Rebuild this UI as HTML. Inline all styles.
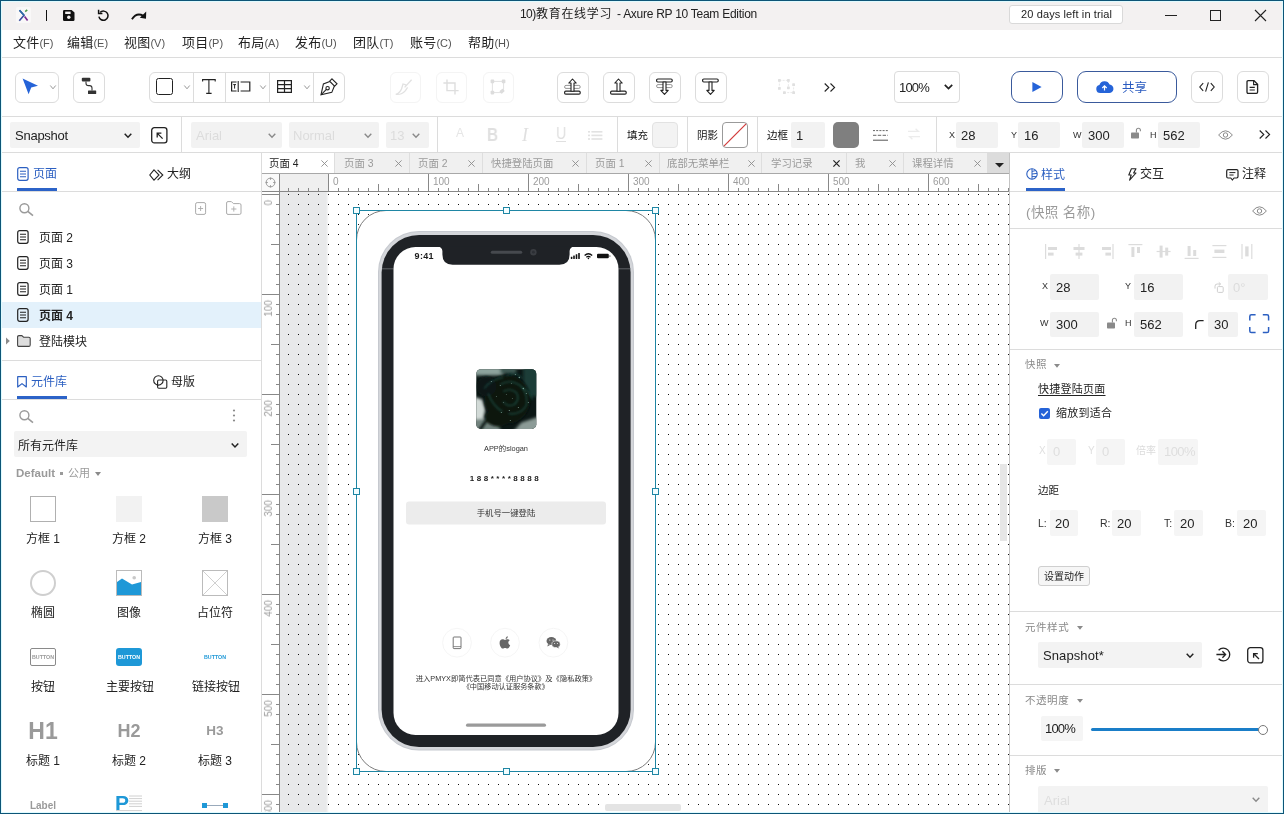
<!DOCTYPE html>
<html lang="zh"><head><meta charset="utf-8"><title>Axure RP 10</title>
<style>
*{box-sizing:border-box;margin:0;padding:0}
html,body{width:1284px;height:814px;overflow:hidden;background:#fff}
body{position:relative;font-family:"Liberation Sans","Noto Sans CJK SC",sans-serif;font-size:13px;color:#222;-webkit-font-smoothing:antialiased}
.abs,.abs *{position:absolute}
div,span,svg{position:absolute}
.t{white-space:nowrap;line-height:1;will-change:transform}
svg{overflow:visible}
/* frame */
#frame{left:0;top:0;width:1284px;height:814px;border:1px solid #0d5577;z-index:100;pointer-events:none}
#frame2{left:1px;top:1px;width:1282px;height:812px;border:1px solid #dffbff;z-index:99;pointer-events:none}
#titlebar{left:0;top:0;width:1284px;height:30px;background:#f3f1f1}
#menubar{left:0;top:30px;width:1284px;height:28px;background:#fff;border-bottom:1px solid #dcdcdc}
.mi{top:36px;font-size:13px;color:#222;letter-spacing:0.2px}
.mi i{font-style:normal;color:#555;font-size:11px;letter-spacing:0;position:static}
#toolbar{left:0;top:58px;width:1284px;height:58px;background:#fff}
.tb{top:72px;height:31px;border:1px solid #dcdcdc;border-radius:6px;background:#fff}
#stylebar{left:0;top:116px;width:1284px;height:37px;background:#fff;border-top:1px solid #dcdcdc;border-bottom:1px solid #dcdcdc}
.vd{top:117px;width:1px;height:35px;background:#dcdcdc}
.cl{width:80px;text-align:center;font-size:12px;color:#222}
.rl{font-size:10px;color:#9c9c9c}
.hd{width:7px;height:7px;background:#f2fdff;border:1px solid #1f86a4}
.lb{font-size:9px;color:#333}
.sh{font-size:10.5px;color:#8a8a8a;letter-spacing:0.55px}
.inp{background:#f2f2f2;border-radius:2px}
</style></head><body>
<div id="titlebar"></div>
<div id="menubar"></div>
<div id="toolbar"></div>
<div id="stylebar"></div>
<div style="left:16px;top:7px;width:15px;height:16px;background:#f9f8f8;border-radius:2px"></div><svg style="left:18px;top:9px" width="12" height="13" viewBox="0 0 12 13"><path d="M1.5 1.2 L6 6.3 L1.3 11.8" fill="none" stroke="#3b4fa0" stroke-width="1.6"/><path d="M1.5 1.2 L6 6.3" fill="none" stroke="#2b6ea8" stroke-width="1.6"/><path d="M7.2 2.6 L9.2 0.8" stroke="#4a9a4a" stroke-width="1.6"/><path d="M6.6 7.4 L9.6 11.4" stroke="#7a2a90" stroke-width="1.6"/></svg>
<div style="left:46px;top:10px;width:1px;height:11px;background:#111"></div>
<svg style="left:63px;top:10px" width="12" height="11" viewBox="0 0 12 11"><path d="M1.2 0 H8.6 L11.5 2.6 V9.8 Q11.5 11 10.3 11 H1.2 Q0 11 0 9.8 V1.2 Q0 0 1.2 0 Z" fill="#111"/><rect x="2.2" y="1.6" width="5.4" height="2.4" fill="#f3f1f1"/><circle cx="5.8" cy="7.3" r="1.7" fill="#f3f1f1"/></svg>
<svg style="left:97px;top:9px" width="13" height="13" viewBox="0 0 13 13"><path d="M3.2 3.4 A4.6 4.6 0 1 1 1.9 7.6" fill="none" stroke="#111" stroke-width="1.5"/><path d="M1.6 0.8 V4.6 H5.4" fill="none" stroke="#111" stroke-width="1.5"/></svg>
<svg style="left:131px;top:11px" width="16" height="10" viewBox="0 0 16 10"><path d="M0.9 8.2 Q5.6 1 12.4 4.8" fill="none" stroke="#111" stroke-width="1.8"/><path d="M15.2 0.6 L15 7.8 L8.8 6.8 Z" fill="#111"/></svg>
<span class="t" style="left:520px;top:8px;font-size:12px;color:#222;letter-spacing:-0.6px">10)</span><span class="t" style="left:535.6px;top:8px;font-size:12px;color:#222;letter-spacing:0.7px">教育在线学习</span><span class="t" style="left:617px;top:8px;font-size:12px;color:#222;letter-spacing:-0.27px">- Axure RP 10 Team Edition</span>
<div style="left:1009px;top:5px;width:114px;height:19px;background:#fff;border:1px solid #d9d9d9;border-radius:3px"></div>
<span class="t" style="left:1021px;top:9px;font-size:11px;color:#222;letter-spacing:0.12px">20 days left in trial</span>
<div style="left:1165px;top:15px;width:12px;height:1px;background:#222"></div>
<div style="left:1210px;top:10px;width:11px;height:11px;border:1px solid #222"></div>
<svg style="left:1255px;top:10px" width="11" height="11" viewBox="0 0 11 11"><path d="M0 0 L11 11 M11 0 L0 11" stroke="#222" stroke-width="1.1"/></svg>
<!--TITLE-->
<span class="t mi" style="left:13px">文件<i>(F)</i></span>
<span class="t mi" style="left:67px">编辑<i>(E)</i></span>
<span class="t mi" style="left:124px">视图<i>(V)</i></span>
<span class="t mi" style="left:182px">项目<i>(P)</i></span>
<span class="t mi" style="left:238px">布局<i>(A)</i></span>
<span class="t mi" style="left:295px">发布<i>(U)</i></span>
<span class="t mi" style="left:353px">团队<i>(T)</i></span>
<span class="t mi" style="left:410px">账号<i>(C)</i></span>
<span class="t mi" style="left:468px">帮助<i>(H)</i></span>
<!--MENU-->
<div class="tb" style="left:15px;width:44px"></div>
<svg style="left:22px;top:78px" width="17" height="17" viewBox="0 0 17 17"><path d="M0.6 0.4 L16 7.8 L9.2 9.6 L6.6 16.2 Z" fill="#2563d8"/></svg>
<svg style="left:50px;top:85px" width="6" height="5" viewBox="0 0 6 5"><path d="M0.3 0.5 L3 3.8 L5.7 0.5" fill="none" stroke="#999" stroke-width="1"/></svg>
<div class="tb" style="left:73px;width:32px"></div>
<svg style="left:81px;top:77px" width="16" height="18" viewBox="0 0 16 18"><rect x="0.8" y="0.8" width="8.6" height="3.6" rx="1" fill="#333"/><rect x="7" y="13.4" width="8.2" height="3.6" rx="0.6" fill="#333"/><path d="M5 4.4 V6.2 Q5 8.6 7.6 8.6 H8.6 Q11 8.6 11 11 V13.4" fill="none" stroke="#333" stroke-width="1.1"/></svg>
<div class="tb" style="left:149px;width:196px"></div>
<div style="left:193px;top:73px;width:1px;height:29px;background:#dcdcdc"></div>
<div style="left:225px;top:73px;width:1px;height:29px;background:#dcdcdc"></div>
<div style="left:269px;top:73px;width:1px;height:29px;background:#dcdcdc"></div>
<div style="left:313px;top:73px;width:1px;height:29px;background:#dcdcdc"></div>
<div style="left:156px;top:78px;width:17px;height:17px;border:1.5px solid #222;border-radius:2.5px"></div>
<svg style="left:184px;top:85px" width="6" height="5" viewBox="0 0 6 5"><path d="M0.3 0.5 L3 3.8 L5.7 0.5" fill="none" stroke="#999" stroke-width="1"/></svg>
<svg style="left:202px;top:79px" width="14" height="15" viewBox="0 0 14 15"><path d="M0.6 2.6 V0.6 H13.2 V2.6 M6.9 0.6 V14.4 M4.2 14.4 H9.6" fill="none" stroke="#222" stroke-width="1.1"/></svg>
<svg style="left:231px;top:81px" width="20" height="11" viewBox="0 0 20 11"><path d="M5.6 1 H0.6 V10 H5.6" fill="none" stroke="#222" stroke-width="1.2"/><path d="M7.2 0 V11" stroke="#222" stroke-width="1.1"/><path d="M9.6 1 H18.8 V10 H9.6" fill="none" stroke="#222" stroke-width="1.2"/><path d="M2.2 3.6 H5 M3.6 3.6 V7.6" stroke="#222" stroke-width="1"/></svg>
<svg style="left:260px;top:85px" width="6" height="5" viewBox="0 0 6 5"><path d="M0.3 0.5 L3 3.8 L5.7 0.5" fill="none" stroke="#999" stroke-width="1"/></svg>
<svg style="left:277px;top:80px" width="15" height="13" viewBox="0 0 15 13"><path d="M0.6 0.6 H14.4 V12.4 H0.6 Z M0.6 4.6 H14.4 M0.6 8.6 H14.4 M7.5 0.6 V12.4" fill="none" stroke="#222" stroke-width="1.2"/></svg>
<svg style="left:304px;top:85px" width="6" height="5" viewBox="0 0 6 5"><path d="M0.3 0.5 L3 3.8 L5.7 0.5" fill="none" stroke="#999" stroke-width="1"/></svg>
<svg style="left:320px;top:78px" width="18" height="18" viewBox="0 0 18 18"><path d="M12 0.8 L17 5.8 L14.6 8.2 L9.6 3.2 Z" fill="none" stroke="#222" stroke-width="1.1"/><path d="M9.8 3.4 L3.4 6 L1 16.8 L11.8 14.4 L14.4 8" fill="none" stroke="#222" stroke-width="1.1"/><circle cx="7.6" cy="10.2" r="1.7" fill="none" stroke="#222" stroke-width="1.1"/><path d="M1.2 16.6 L6.4 11.4" stroke="#222" stroke-width="1.1"/></svg>
<!-- disabled -->
<div class="tb" style="left:390px;width:31px;border-color:#f4f4f4"></div>
<svg style="left:395px;top:79px" width="18" height="17" viewBox="0 0 18 17" opacity="0.9"><path d="M16.6 0.8 L9.6 8.4 M11.6 6.2 L8 5 L6.6 9.8 Q5 14 0.8 15.4 Q7 16 10.4 11.6 L12.6 8.4" fill="none" stroke="#dedede" stroke-width="1.3"/></svg>
<div class="tb" style="left:436px;width:31px;border-color:#f4f4f4"></div>
<svg style="left:443px;top:79px" width="16" height="16" viewBox="0 0 16 16"><path d="M4 0.6 V11.6 H15.6 M0.4 4 H12 V15.6" fill="none" stroke="#dedede" stroke-width="1.4"/></svg>
<div class="tb" style="left:483px;width:31px;border-color:#f4f4f4"></div>
<svg style="left:490px;top:79px" width="16" height="16" viewBox="0 0 16 16"><path d="M2.4 2.4 H13.6 V10 L11 13.6 H2.4 Z" fill="none" stroke="#e2e2e2" stroke-width="1"/><rect x="0.6" y="0.6" width="3.6" height="3.6" rx="0.8" fill="#dcdcdc"/><rect x="11.8" y="0.6" width="3.6" height="3.6" rx="0.8" fill="#dcdcdc"/><rect x="0.6" y="11.8" width="3.6" height="3.6" rx="0.8" fill="#dcdcdc"/><rect x="10" y="10.6" width="4.4" height="3.4" rx="0.8" fill="#dcdcdc" transform="rotate(-40 12 12.4)"/></svg>
<!-- layer buttons -->
<div class="tb" style="left:557px;width:32px"></div>
<svg style="left:564px;top:78px" width="17" height="17" viewBox="0 0 17 17"><rect x="0.6" y="7.4" width="15.6" height="3" rx="1.4" fill="none" stroke="#888" stroke-width="0.9"/><rect x="0.6" y="13.2" width="15.6" height="3" rx="1.2" fill="#fff" stroke="#222" stroke-width="1.2"/><path d="M8.5 1 L4.8 5 H7 V13.2 H10 V5 H12.2 Z" fill="#fff" stroke="#222" stroke-width="1.1" stroke-linejoin="round"/></svg>
<div class="tb" style="left:603px;width:32px"></div>
<svg style="left:610px;top:78px" width="17" height="17" viewBox="0 0 17 17"><rect x="0.6" y="13.2" width="15.6" height="3" rx="1.2" fill="#fff" stroke="#222" stroke-width="1.2"/><path d="M8.5 1 L4.8 5 H7 V13.2 H10 V5 H12.2 Z" fill="#fff" stroke="#222" stroke-width="1.1" stroke-linejoin="round"/></svg>
<div class="tb" style="left:649px;width:32px"></div>
<svg style="left:656px;top:78px" width="17" height="17" viewBox="0 0 17 17"><rect x="0.6" y="6.6" width="15.6" height="3" rx="1.4" fill="none" stroke="#888" stroke-width="0.9"/><rect x="0.6" y="1" width="15.6" height="3" rx="1.2" fill="#fff" stroke="#222" stroke-width="1.2"/><path d="M8.5 16.4 L4.8 12.4 H7 V4 H10 V12.4 H12.2 Z" fill="#fff" stroke="#222" stroke-width="1.1" stroke-linejoin="round"/></svg>
<div class="tb" style="left:695px;width:32px"></div>
<svg style="left:702px;top:78px" width="17" height="17" viewBox="0 0 17 17"><rect x="0.6" y="1" width="15.6" height="3" rx="1.2" fill="#fff" stroke="#222" stroke-width="1.2"/><path d="M8.5 16.4 L4.8 12.4 H7 V4 H10 V12.4 H12.2 Z" fill="#fff" stroke="#222" stroke-width="1.1" stroke-linejoin="round"/></svg>
<svg style="left:778px;top:79px" width="18" height="15" viewBox="0 0 18 15"><path d="M1.4 1.4 H10.4 V9 M1.4 1.4 V9.6 M6 13.6 H15.6 V5.6" fill="none" stroke="#e6e6e6" stroke-width="0.9" stroke-dasharray="2 1.2"/><g fill="#e0e0e0"><rect x="0" y="0" width="2.8" height="2.8" rx="0.6"/><rect x="9" y="0" width="2.8" height="2.8" rx="0.6"/><rect x="0" y="8" width="2.8" height="2.8" rx="0.6"/><rect x="9" y="7.4" width="2.8" height="2.8" rx="0.6"/><rect x="14.2" y="4.2" width="2.8" height="2.8" rx="0.6"/><rect x="5" y="12.2" width="2.8" height="2.8" rx="0.6"/><rect x="14.2" y="12.2" width="2.8" height="2.8" rx="0.6"/></g></svg>
<svg style="left:824px;top:83px" width="12" height="9" viewBox="0 0 12 9"><path d="M0.7 0.5 L4.8 4.5 L0.7 8.5 M6.5 0.5 L10.6 4.5 L6.5 8.5" fill="none" stroke="#222" stroke-width="1.1"/></svg>
<div class="tb" style="left:894px;top:71px;width:66px;height:32px;border-radius:4px"></div>
<span class="t" style="left:899px;top:81px;font-size:13px;color:#222;letter-spacing:-0.8px">100%</span>
<svg style="left:944px;top:84px" width="9" height="6" viewBox="0 0 9 6"><path d="M0.8 0.8 L4.5 4.6 L8.2 0.8" fill="none" stroke="#222" stroke-width="1.7"/></svg>
<div style="left:1011px;top:71px;width:52px;height:32px;border:1.3px solid #3a5a9c;border-radius:9px;background:#fff"></div>
<svg style="left:1032px;top:82px" width="10" height="10" viewBox="0 0 10 10"><path d="M0.4 0 L9.6 5 L0.4 10 Z" fill="#2563d8"/></svg>
<div style="left:1077px;top:71px;width:100px;height:32px;border:1.3px solid #3a5a9c;border-radius:9px;background:#fff"></div>
<svg style="left:1096px;top:80px" width="17" height="13" viewBox="0 0 17 13"><path d="M4.2 13 A4 4 0 0 1 3.4 5.1 A5.4 5.4 0 0 1 13.6 4.6 A4.2 4.2 0 0 1 12.9 13 Z" fill="#2563d8"/><path d="M8.5 10.6 V6 M6.3 8 L8.5 5.8 L10.7 8" fill="none" stroke="#fff" stroke-width="1.2"/></svg>
<span class="t" style="left:1121.5px;top:82px;font-size:12.5px;color:#2a5bc0">共享</span>
<div class="tb" style="left:1191px;top:71px;width:32px;height:32px"></div>
<svg style="left:1199px;top:82px" width="16" height="10" viewBox="0 0 16 10"><path d="M4.2 1.2 L0.8 5 L4.2 8.8 M11.8 1.2 L15.2 5 L11.8 8.8 M9.4 0.4 L6.6 9.6" fill="none" stroke="#222" stroke-width="1.1"/></svg>
<div class="tb" style="left:1237px;top:71px;width:32px;height:32px"></div>
<svg style="left:1246px;top:80px" width="13" height="14" viewBox="0 0 13 14"><path d="M2.2 0.7 H8 L11.6 4.2 V12 Q11.6 13.3 10.4 13.3 H2.2 Q1 13.3 1 12 V2 Q1 0.7 2.2 0.7 Z" fill="none" stroke="#222" stroke-width="1.3"/><path d="M7.6 0.8 V4.6 H11.4" fill="none" stroke="#222" stroke-width="1.1"/><path d="M3.6 7.4 H8.8 M3.6 10 H8.8" stroke="#222" stroke-width="1.1"/></svg>
<!--TOOLBAR-->
<div class="inp" style="left:10px;top:122px;width:130px;height:26px;background:#f3f3f3"></div>
<span class="t" style="left:15px;top:129px;font-size:13px;color:#222;letter-spacing:-0.25px">Snapshot</span>
<svg style="left:124px;top:133px" width="8" height="6" viewBox="0 0 8 6"><path d="M0.7 0.8 L4 4.2 L7.3 0.8" fill="none" stroke="#222" stroke-width="1.5"/></svg>
<svg style="left:151px;top:127px" width="17" height="17" viewBox="0 0 17 17"><rect x="0.7" y="0.7" width="15.2" height="15.2" rx="2.6" fill="none" stroke="#222" stroke-width="1.3"/><path d="M11.6 11.6 L6.6 6.6 M6.2 10.4 V6.2 H10.4" fill="none" stroke="#222" stroke-width="1.3"/></svg>
<div class="vd" style="left:181px"></div>
<div class="inp" style="left:191px;top:122px;width:91px;height:26px"></div>
<span class="t" style="left:196px;top:129px;font-size:13px;color:#dcdcdc">Arial</span>
<svg style="left:268px;top:133px" width="8" height="6" viewBox="0 0 8 6"><path d="M0.7 0.8 L4 4.2 L7.3 0.8" fill="none" stroke="#8a8a8a" stroke-width="1.4"/></svg>
<div class="inp" style="left:289px;top:122px;width:90px;height:26px"></div>
<span class="t" style="left:293px;top:129px;font-size:13px;color:#dcdcdc">Normal</span>
<svg style="left:364px;top:133px" width="8" height="6" viewBox="0 0 8 6"><path d="M0.7 0.8 L4 4.2 L7.3 0.8" fill="none" stroke="#8a8a8a" stroke-width="1.4"/></svg>
<div class="inp" style="left:386px;top:122px;width:43px;height:26px"></div>
<span class="t" style="left:390px;top:129px;font-size:13px;color:#dcdcdc">13</span>
<svg style="left:412px;top:133px" width="8" height="6" viewBox="0 0 8 6"><path d="M0.7 0.8 L4 4.2 L7.3 0.8" fill="none" stroke="#8a8a8a" stroke-width="1.4"/></svg>
<div class="vd" style="left:437px"></div>
<span class="t" style="left:455.5px;top:127px;font-size:12px;color:#e6e6e6">A</span>
<span class="t" style="left:487px;top:126px;font-size:18px;color:#e0e0e0;font-weight:bold;transform:scaleX(0.85);transform-origin:0 0">B</span>
<span class="t" style="left:522px;top:126px;font-size:18px;color:#e0e0e0;font-style:italic;font-family:'Liberation Serif',serif">I</span>
<span class="t" style="left:555.5px;top:126px;font-size:16px;color:#e0e0e0;transform:scaleX(0.88);transform-origin:0 0">U</span>
<div style="left:556px;top:141px;width:10px;height:1px;background:#e0e0e0"></div>
<svg style="left:588px;top:131px" width="15" height="9" viewBox="0 0 15 9"><g fill="#e2e2e2"><rect x="0" y="0" width="2" height="1.6"/><rect x="3.4" y="0" width="11" height="1.6"/><rect x="0" y="3.6" width="2" height="1.6"/><rect x="3.4" y="3.6" width="11" height="1.6"/><rect x="0" y="7.2" width="2" height="1.6"/><rect x="3.4" y="7.2" width="11" height="1.6"/></g></svg>
<div class="vd" style="left:617px"></div>
<span class="t" style="left:627px;top:130px;font-size:10.5px;color:#111">填充</span>
<div style="left:652px;top:122px;width:26px;height:26px;background:#f3f3f3;border:1px solid #e2e2e2;border-radius:4px"></div>
<div class="vd" style="left:687px"></div>
<span class="t" style="left:697px;top:130px;font-size:10.5px;color:#111">阴影</span>
<div style="left:722px;top:122px;width:26px;height:26px;background:#fff;border:1px solid #9a9a9a;border-radius:4px;overflow:hidden"><svg style="left:0;top:0" width="24" height="24" viewBox="0 0 24 24"><path d="M0 24 L24 0" stroke="#d23a3a" stroke-width="1.2"/></svg></div>
<div class="vd" style="left:757px"></div>
<span class="t" style="left:767px;top:130px;font-size:10.5px;color:#111">边框</span>
<div class="inp" style="left:791px;top:122px;width:34px;height:26px"></div>
<span class="t" style="left:796px;top:129px;font-size:13px;color:#222">1</span>
<div style="left:833px;top:122px;width:26px;height:26px;background:#7f7f7f;border-radius:5px"></div>
<svg style="left:873px;top:130px" width="15" height="11" viewBox="0 0 15 11"><path d="M0 0.6 H15" stroke="#555" stroke-width="0.9" stroke-dasharray="2 1.2"/><path d="M0 5.3 H15" stroke="#555" stroke-width="0.9" stroke-dasharray="3.4 1.4"/><path d="M0 10.2 H15" stroke="#555" stroke-width="1"/></svg>
<svg style="left:907px;top:128px" width="14" height="12" viewBox="0 0 14 12"><path d="M1 3.4 H11.4 L8.6 0.8 M13 8.6 H2.6 L5.4 11.2" fill="none" stroke="#ececec" stroke-width="1.3"/></svg>
<div class="vd" style="left:936px"></div>
<span class="t" style="left:949px;top:131px;font-size:9px;color:#333">X</span>
<div class="inp" style="left:956px;top:122px;width:42px;height:26px"></div>
<span class="t" style="left:961px;top:129px;font-size:13px;color:#222">28</span>
<span class="t" style="left:1011px;top:131px;font-size:9px;color:#333">Y</span>
<div class="inp" style="left:1018px;top:122px;width:42px;height:26px"></div>
<span class="t" style="left:1024px;top:129px;font-size:13px;color:#222">16</span>
<span class="t" style="left:1073px;top:131px;font-size:9px;color:#333">W</span>
<div class="inp" style="left:1082px;top:122px;width:42px;height:26px"></div>
<span class="t" style="left:1088px;top:129px;font-size:13px;color:#222">300</span>
<svg style="left:1131px;top:127px" width="10" height="12" viewBox="0 0 10 12"><rect x="0" y="5.6" width="8" height="6" rx="0.8" fill="#8a8a8a"/><path d="M5.4 5.6 V3.2 A2 2 0 0 1 9.4 3.2 V4.2" fill="none" stroke="#8a8a8a" stroke-width="1.1"/></svg>
<span class="t" style="left:1150px;top:131px;font-size:9px;color:#333">H</span>
<div class="inp" style="left:1158px;top:122px;width:42px;height:26px"></div>
<span class="t" style="left:1163px;top:129px;font-size:13px;color:#222">562</span>
<svg style="left:1218px;top:130px" width="15" height="10" viewBox="0 0 15 10"><path d="M0.6 5 Q7.5 -3.4 14.4 5 Q7.5 13.4 0.6 5 Z" fill="none" stroke="#8a8a8a" stroke-width="1"/><circle cx="7.5" cy="5" r="2.2" fill="none" stroke="#8a8a8a" stroke-width="1"/></svg>
<svg style="left:1259px;top:130px" width="12" height="9" viewBox="0 0 12 9"><path d="M0.7 0.5 L4.8 4.5 L0.7 8.5 M6.5 0.5 L10.6 4.5 L6.5 8.5" fill="none" stroke="#222" stroke-width="1.1"/></svg>
<!--STYLEBAR-->
<div id="leftpanel" style="left:0;top:153px;width:261px;height:661px;background:#fff"></div>
<div style="left:261px;top:153px;width:1px;height:661px;background:#dcdcdc"></div>
<!-- tabs -->
<svg style="left:17px;top:167px" width="12" height="14" viewBox="0 0 12 14"><rect x="0.7" y="0.7" width="10.4" height="12.6" rx="2" fill="none" stroke="#2b5fc1" stroke-width="1.2"/><path d="M3 4.2 H9 M3 7 H9 M3 9.8 H9" stroke="#2b5fc1" stroke-width="1.1"/></svg>
<span class="t" style="left:33px;top:168px;font-size:12px;color:#2b5fc1">页面</span>
<div style="left:17px;top:188px;width:40px;height:3px;background:#2c63c8"></div>
<svg style="left:149px;top:169px" width="15" height="12" viewBox="0 0 15 12"><path d="M5 0.8 L10 6 L5 11.2 L0.8 6 Z" fill="none" stroke="#222" stroke-width="1.1"/><path d="M8.6 0.8 L13.8 6 L8.6 11.2" fill="none" stroke="#222" stroke-width="1.1"/></svg>
<span class="t" style="left:167px;top:168px;font-size:12px;color:#222">大纲</span>
<div style="left:0;top:191px;width:261px;height:1px;background:#dcdcdc"></div>
<!-- search row -->
<svg style="left:19px;top:203px" width="15" height="13" viewBox="0 0 15 13"><circle cx="5.4" cy="5.2" r="4.5" fill="none" stroke="#9a9a9a" stroke-width="1.4"/><path d="M8.8 8.4 L14 12.6" stroke="#9a9a9a" stroke-width="1.6"/></svg>
<svg style="left:195px;top:202px" width="12" height="13" viewBox="0 0 12 13"><rect x="0.6" y="0.6" width="10" height="11.8" rx="1.6" fill="none" stroke="#aaa" stroke-width="1"/><path d="M5.6 4 V9 M3.1 6.5 H8.1" stroke="#aaa" stroke-width="0.9"/></svg>
<svg style="left:226px;top:201px" width="16" height="14" viewBox="0 0 16 14"><path d="M0.6 2 Q0.6 0.6 2 0.6 H5.4 L7.4 2.6 H13.6 Q15 2.6 15 4 V12 Q15 13.4 13.6 13.4 H2 Q0.6 13.4 0.6 12 Z" fill="none" stroke="#aaa" stroke-width="1"/><path d="M7.8 5.4 V10.6 M5.2 8 H10.4" stroke="#aaa" stroke-width="0.9"/></svg>
<!-- pages -->
<div style="left:0;top:302px;width:261px;height:26px;background:#e3f1fb"></div>
<svg class="pgi" style="left:17px;top:230px" width="12" height="14" viewBox="0 0 12 14"><rect x="0.7" y="0.7" width="10.4" height="12.6" rx="2" fill="none" stroke="#222" stroke-width="1.2"/><path d="M3 4.2 H9 M3 7 H9 M3 9.8 H9" stroke="#222" stroke-width="1.1"/></svg>
<span class="t" style="left:39px;top:232px;font-size:12px;color:#222">页面 2</span>
<svg class="pgi" style="left:17px;top:256px" width="12" height="14" viewBox="0 0 12 14"><rect x="0.7" y="0.7" width="10.4" height="12.6" rx="2" fill="none" stroke="#222" stroke-width="1.2"/><path d="M3 4.2 H9 M3 7 H9 M3 9.8 H9" stroke="#222" stroke-width="1.1"/></svg>
<span class="t" style="left:39px;top:258px;font-size:12px;color:#222">页面 3</span>
<svg class="pgi" style="left:17px;top:282px" width="12" height="14" viewBox="0 0 12 14"><rect x="0.7" y="0.7" width="10.4" height="12.6" rx="2" fill="none" stroke="#222" stroke-width="1.2"/><path d="M3 4.2 H9 M3 7 H9 M3 9.8 H9" stroke="#222" stroke-width="1.1"/></svg>
<span class="t" style="left:39px;top:284px;font-size:12px;color:#222">页面 1</span>
<svg class="pgi" style="left:17px;top:308px" width="12" height="14" viewBox="0 0 12 14"><rect x="0.7" y="0.7" width="10.4" height="12.6" rx="2" fill="none" stroke="#222" stroke-width="1.2"/><path d="M3 4.2 H9 M3 7 H9 M3 9.8 H9" stroke="#222" stroke-width="1.1"/></svg>
<span class="t" style="left:39px;top:310px;font-size:12px;color:#222;font-weight:bold">页面 4</span>
<svg style="left:6px;top:337px" width="4" height="8" viewBox="0 0 4 8"><path d="M0 0.4 L3.8 4 L0 7.6 Z" fill="#8a8a8a"/></svg>
<svg style="left:17px;top:335px" width="14" height="12" viewBox="0 0 14 12"><path d="M0.6 2 Q0.6 0.6 2 0.6 H4.8 L6.6 2.2 H11.8 Q13.2 2.2 13.2 3.6 V10 Q13.2 11.4 11.8 11.4 H2 Q0.6 11.4 0.6 10 Z" fill="#dedede" stroke="#444" stroke-width="1.1"/></svg>
<span class="t" style="left:39px;top:336px;font-size:12px;color:#222">登陆模块</span>
<div style="left:0;top:360px;width:261px;height:1px;background:#dcdcdc"></div>
<!-- library tabs -->
<svg style="left:17px;top:376px" width="10" height="12" viewBox="0 0 10 12"><path d="M0.7 0.7 H9.3 V11 L5 7.6 L0.7 11 Z" fill="none" stroke="#2b5fc1" stroke-width="1.2" stroke-linejoin="round"/></svg>
<span class="t" style="left:31px;top:376px;font-size:12px;color:#2b5fc1">元件库</span>
<div style="left:17px;top:396px;width:50px;height:3px;background:#2c63c8"></div>
<svg style="left:153px;top:375px" width="15" height="14" viewBox="0 0 15 14"><circle cx="5.4" cy="5.4" r="4.7" fill="none" stroke="#222" stroke-width="1.1"/><rect x="4.6" y="5" width="9.2" height="8.2" rx="1.2" fill="none" stroke="#222" stroke-width="1.1"/></svg>
<span class="t" style="left:171px;top:376px;font-size:12px;color:#222">母版</span>
<div style="left:0;top:399px;width:261px;height:1px;background:#dcdcdc"></div>
<svg style="left:19px;top:410px" width="15" height="13" viewBox="0 0 15 13"><circle cx="5.4" cy="5.2" r="4.5" fill="none" stroke="#9a9a9a" stroke-width="1.4"/><path d="M8.8 8.4 L14 12.6" stroke="#9a9a9a" stroke-width="1.6"/></svg>
<svg style="left:232px;top:409px" width="4" height="13" viewBox="0 0 4 13"><circle cx="2" cy="1.5" r="1.1" fill="#8a8a8a"/><circle cx="2" cy="6.5" r="1.1" fill="#8a8a8a"/><circle cx="2" cy="11.5" r="1.1" fill="#8a8a8a"/></svg>
<div class="inp" style="left:14px;top:431px;width:233px;height:26px;background:#f3f3f3"></div>
<span class="t" style="left:18px;top:440px;font-size:12px;color:#222">所有元件库</span>
<svg style="left:231px;top:443px" width="8" height="6" viewBox="0 0 8 6"><path d="M0.7 0.6 L4 4 L7.3 0.6" fill="none" stroke="#222" stroke-width="1.5"/></svg>
<span class="t" style="left:16px;top:468px;font-size:11.5px;color:#9a9a9a;font-weight:bold">Default</span>
<div style="left:60px;top:472px;width:3px;height:3px;background:#9a9a9a"></div>
<span class="t" style="left:68px;top:468px;font-size:11px;color:#9a9a9a">公用</span>
<svg style="left:95px;top:472px" width="6" height="4" viewBox="0 0 6 4"><path d="M0 0 H6 L3 4 Z" fill="#8a8a8a"/></svg>
<!-- components -->
<div style="left:30px;top:496px;width:26px;height:26px;border:1px solid #b0b0b0;background:#fff"></div>
<div style="left:116px;top:496px;width:26px;height:26px;background:#f2f2f2"></div>
<div style="left:202px;top:496px;width:26px;height:26px;background:#c9c9c9"></div>
<span class="t cl" style="left:3px;top:533px">方框 1</span>
<span class="t cl" style="left:89px;top:533px">方框 2</span>
<span class="t cl" style="left:175px;top:533px">方框 3</span>
<div style="left:30px;top:570px;width:26px;height:26px;border:2px solid #cfcfcf;border-radius:50%"></div>
<svg style="left:116px;top:570px" width="26" height="26" viewBox="0 0 26 26"><rect x="0.5" y="0.5" width="25" height="25" fill="#fff" stroke="#bbb" stroke-width="1"/><path d="M1 12 L6 8.4 L16 14.6 L25 12 V25 H1 Z" fill="#1e98d7"/><circle cx="18.2" cy="7.8" r="1.8" fill="#c8c8c8"/></svg>
<svg style="left:202px;top:570px" width="26" height="26" viewBox="0 0 26 26"><rect x="0.5" y="0.5" width="25" height="25" fill="#fff" stroke="#bbb" stroke-width="1"/><path d="M0.5 0.5 L25.5 25.5 M25.5 0.5 L0.5 25.5" stroke="#bbb" stroke-width="0.7"/></svg>
<span class="t cl" style="left:3px;top:607px">椭圆</span>
<span class="t cl" style="left:89px;top:607px">图像</span>
<span class="t cl" style="left:175px;top:607px">占位符</span>
<div style="left:30px;top:648px;width:26px;height:18px;border:1px solid #8a8a8a;border-radius:2px;background:#fff"></div>
<span class="t" style="left:30px;top:655px;width:26px;text-align:center;font-size:5.3px;font-weight:bold;color:#9a9a9a;letter-spacing:0">BUTTON</span>
<div style="left:116px;top:648px;width:26px;height:18px;border-radius:3px;background:#1e98d7"></div>
<span class="t" style="left:116px;top:655px;width:26px;text-align:center;font-size:5.3px;font-weight:bold;color:#fff;letter-spacing:0">BUTTON</span>
<span class="t" style="left:202px;top:655px;width:26px;text-align:center;font-size:5.3px;font-weight:bold;color:#1e98d7;letter-spacing:0">BUTTON</span>
<span class="t cl" style="left:3px;top:681px">按钮</span>
<span class="t cl" style="left:90px;top:681px">主要按钮</span>
<span class="t cl" style="left:176px;top:681px">链接按钮</span>
<span class="t" style="left:3px;top:720px;width:80px;text-align:center;font-size:23px;font-weight:bold;color:#9a9a9a">H1</span>
<span class="t" style="left:89px;top:722px;width:80px;text-align:center;font-size:18px;font-weight:bold;color:#9a9a9a">H2</span>
<span class="t" style="left:175px;top:724px;width:80px;text-align:center;font-size:13.5px;font-weight:bold;color:#9a9a9a">H3</span>
<span class="t cl" style="left:3px;top:755px">标题 1</span>
<span class="t cl" style="left:89px;top:755px">标题 2</span>
<span class="t cl" style="left:175px;top:755px">标题 3</span>
<span class="t" style="left:3px;top:801px;width:80px;text-align:center;font-size:10px;font-weight:bold;color:#9a9a9a">Label</span>
<span class="t" style="left:115px;top:792px;font-size:21px;font-weight:bold;color:#1e98d7">P</span>
<svg style="left:128px;top:795px" width="15" height="19" viewBox="0 0 15 19"><path d="M1 1 H14 M1 3.6 H14 M1 6.2 H14 M1 8.8 H14 M1 11.4 H14 M-12 15.6 H14" stroke="#c4c4c4" stroke-width="0.8"/></svg>
<div style="left:204px;top:805px;width:22px;height:1px;background:#9ab"></div>
<div style="left:202px;top:803px;width:5px;height:5px;background:#1e98d7"></div>
<div style="left:223px;top:803px;width:5px;height:5px;background:#1e98d7"></div>
<!--LEFT-->
<div id="canvasbg" style="left:262px;top:153px;width:748px;height:661px;background:#fff"></div>
<div style="left:262px;top:153px;width:748px;height:21px;background:#f0f0f0"></div>
<div style="left:262px;top:153px;width:72px;height:21px;background:#fff"></div>
<div style="left:334px;top:153px;width:1px;height:20px;background:#dedede"></div>
<span class="t" style="left:269px;top:158.5px;font-size:10.4px;color:#222">页面 4</span>
<svg style="left:321px;top:160px" width="7" height="7" viewBox="0 0 7 7"><path d="M0.4 0.4 L6.6 6.6 M6.6 0.4 L0.4 6.6" stroke="#8c8c8c" stroke-width="0.9"/></svg>
<div style="left:409px;top:153px;width:1px;height:20px;background:#dedede"></div>
<span class="t" style="left:344px;top:158.5px;font-size:10.4px;color:#9a9a9a">页面 3</span>
<svg style="left:395px;top:160px" width="7" height="7" viewBox="0 0 7 7"><path d="M0.4 0.4 L6.6 6.6 M6.6 0.4 L0.4 6.6" stroke="#8c8c8c" stroke-width="0.9"/></svg>
<div style="left:482px;top:153px;width:1px;height:20px;background:#dedede"></div>
<span class="t" style="left:418px;top:158.5px;font-size:10.4px;color:#9a9a9a">页面 2</span>
<svg style="left:468px;top:160px" width="7" height="7" viewBox="0 0 7 7"><path d="M0.4 0.4 L6.6 6.6 M6.6 0.4 L0.4 6.6" stroke="#8c8c8c" stroke-width="0.9"/></svg>
<div style="left:586px;top:153px;width:1px;height:20px;background:#dedede"></div>
<span class="t" style="left:491px;top:158.5px;font-size:10.4px;color:#9a9a9a">快捷登陆页面</span>
<svg style="left:572px;top:160px" width="7" height="7" viewBox="0 0 7 7"><path d="M0.4 0.4 L6.6 6.6 M6.6 0.4 L0.4 6.6" stroke="#8c8c8c" stroke-width="0.9"/></svg>
<div style="left:659px;top:153px;width:1px;height:20px;background:#dedede"></div>
<span class="t" style="left:595px;top:158.5px;font-size:10.4px;color:#9a9a9a">页面 1</span>
<svg style="left:644.5px;top:160px" width="7" height="7" viewBox="0 0 7 7"><path d="M0.4 0.4 L6.6 6.6 M6.6 0.4 L0.4 6.6" stroke="#8c8c8c" stroke-width="0.9"/></svg>
<div style="left:761px;top:153px;width:1px;height:20px;background:#dedede"></div>
<span class="t" style="left:666.5px;top:158.5px;font-size:10.4px;color:#9a9a9a">底部无菜单栏</span>
<svg style="left:748px;top:160px" width="7" height="7" viewBox="0 0 7 7"><path d="M0.4 0.4 L6.6 6.6 M6.6 0.4 L0.4 6.6" stroke="#8c8c8c" stroke-width="0.9"/></svg>
<div style="left:846px;top:153px;width:1px;height:20px;background:#dedede"></div>
<span class="t" style="left:771px;top:158.5px;font-size:10.4px;color:#9a9a9a">学习记录</span>
<svg style="left:832.5px;top:160px" width="7" height="7" viewBox="0 0 7 7"><path d="M0.4 0.4 L6.6 6.6 M6.6 0.4 L0.4 6.6" stroke="#222" stroke-width="1.2"/></svg>
<div style="left:903px;top:153px;width:1px;height:20px;background:#dedede"></div>
<span class="t" style="left:854.5px;top:158.5px;font-size:10.4px;color:#9a9a9a">我</span>
<svg style="left:889px;top:160px" width="7" height="7" viewBox="0 0 7 7"><path d="M0.4 0.4 L6.6 6.6 M6.6 0.4 L0.4 6.6" stroke="#8c8c8c" stroke-width="0.9"/></svg>
<div style="left:987px;top:153px;width:1px;height:20px;background:#dedede"></div>
<span class="t" style="left:912px;top:158.5px;font-size:10.4px;color:#9a9a9a">课程详情</span>
<svg style="left:973.5px;top:160px" width="7" height="7" viewBox="0 0 7 7"><path d="M0.4 0.4 L6.6 6.6 M6.6 0.4 L0.4 6.6" stroke="#8c8c8c" stroke-width="0.9"/></svg>
<div style="left:987px;top:153px;width:22px;height:20px;background:#dcdcdc"></div>
<svg style="left:995px;top:163px" width="9" height="5" viewBox="0 0 9 5"><path d="M0 0 H9 L4.5 4.6 Z" fill="#222"/></svg>
<div style="left:262px;top:173px;width:748px;height:1px;background:#a8a8a8"></div>
<div style="left:262px;top:174px;width:17px;height:17px;background:#fafafa"></div>
<svg style="left:265px;top:177px" width="11" height="11" viewBox="0 0 11 11"><circle cx="5.5" cy="5.5" r="4.4" fill="none" stroke="#9a9a9a" stroke-width="1"/><path d="M5.5 0.6 V2.8 M5.5 8.2 V10.4 M0.6 5.5 H2.8 M8.2 5.5 H10.4" stroke="#9a9a9a" stroke-width="1"/></svg>
<div style="left:280px;top:174px;width:48px;height:17px;background:#efefef"></div>
<div id="hruler" style="left:280px;top:174px;width:729px;height:17px;background-image:linear-gradient(90deg,#888 0,#888 1px,transparent 1px),linear-gradient(90deg,#888 0,#888 1px,transparent 1px),linear-gradient(90deg,#888 0,#888 1px,transparent 1px);background-size:100px 17px,100px 7px,10px 3px;background-position:48px 100%,98px 100%,8px 100%;background-repeat:repeat-x"></div>
<div style="left:262px;top:191px;width:748px;height:1px;background:#888"></div>
<span class="t rl" style="left:332.5px;top:177px">0</span>
<span class="t rl" style="left:432.5px;top:177px">100</span>
<span class="t rl" style="left:532.5px;top:177px">200</span>
<span class="t rl" style="left:632.5px;top:177px">300</span>
<span class="t rl" style="left:732.5px;top:177px">400</span>
<span class="t rl" style="left:832.5px;top:177px">500</span>
<span class="t rl" style="left:932.5px;top:177px">600</span>
<div id="vruler" style="left:262px;top:192px;width:17px;height:622px;background-image:linear-gradient(#888 0,#888 1px,transparent 1px),linear-gradient(#888 0,#888 1px,transparent 1px),linear-gradient(#888 0,#888 1px,transparent 1px);background-size:17px 100px,8px 100px,3px 10px;background-position:0 2px,100% 52px,100% 2px;background-repeat:repeat-y"></div>
<div style="left:279px;top:174px;width:1px;height:640px;background:#888"></div>
<span class="t rl" style="left:263.5px;top:200px;writing-mode:vertical-rl;transform:rotate(180deg)">0</span>
<span class="t rl" style="left:263.5px;top:300px;writing-mode:vertical-rl;transform:rotate(180deg)">100</span>
<span class="t rl" style="left:263.5px;top:400px;writing-mode:vertical-rl;transform:rotate(180deg)">200</span>
<span class="t rl" style="left:263.5px;top:500px;writing-mode:vertical-rl;transform:rotate(180deg)">300</span>
<span class="t rl" style="left:263.5px;top:600px;writing-mode:vertical-rl;transform:rotate(180deg)">400</span>
<span class="t rl" style="left:263.5px;top:700px;writing-mode:vertical-rl;transform:rotate(180deg)">500</span>
<span class="t rl" style="left:263.5px;top:800px;writing-mode:vertical-rl;transform:rotate(180deg)">600</span>
<div style="left:280px;top:192px;width:49px;height:622px;background:linear-gradient(90deg,#e8e9ea 0,#e8e9ea 46px,#fff 49px)"></div>
<svg style="left:280px;top:192px" width="729" height="622"><defs><pattern id="dots" x="8" y="2" width="10" height="10" patternUnits="userSpaceOnUse"><rect x="0" y="0" width="1" height="1" fill="#111"/></pattern></defs><rect width="729" height="622" fill="url(#dots)"/></svg>
<div style="left:1009px;top:153px;width:1px;height:661px;background:#c4c4c4"></div>
<div style="left:1000px;top:464px;width:7px;height:77px;background:#e6e6e6"></div>
<div style="left:605px;top:804px;width:76px;height:7px;background:#e4e4e4;border-radius:2px"></div>
<!-- snapshot widget -->
<div style="left:356px;top:210px;width:300px;height:562px;background:#fff;border:1px solid #7d7d7d;border-radius:30px"></div>
<svg id="phone" style="left:0;top:0;will-change:transform" width="1284" height="814" viewBox="0 0 1284 814" font-family="'Liberation Sans','Noto Sans CJK SC',sans-serif">
<defs>
<clipPath id="imgclip"><rect x="476.3" y="369.3" width="60" height="59.6" rx="4.5"/></clipPath>
<filter id="blur2" x="-20%" y="-20%" width="140%" height="140%"><feGaussianBlur stdDeviation="1.6"/></filter>
<filter id="blur1" x="-20%" y="-20%" width="140%" height="140%"><feGaussianBlur stdDeviation="0.8"/></filter>
<radialGradient id="rose" cx="0.5" cy="0.5" r="0.5"><stop offset="0" stop-color="#050c0b"/><stop offset="0.55" stop-color="#0a1816"/><stop offset="1" stop-color="#0e2320"/></radialGradient>
</defs>
<!-- body -->
<rect x="378" y="231" width="256" height="519.6" rx="41" fill="#c6c9cf"/>
<rect x="379" y="232" width="254" height="517.6" rx="40" fill="#d4d6da"/>
<rect x="381.6" y="235" width="249" height="512" rx="37.5" fill="#1f2226"/>
<path d="M382 268.8 H393.5 M618.5 268.8 H631" stroke="#8a8d92" stroke-width="0.6"/>
<rect x="393.5" y="247" width="225" height="488" rx="22" fill="#fff"/>
<!-- notch -->
<path d="M438 246.5 H574 Q570 247 569.6 251 V254.6 Q569.6 264.8 559.4 264.8 H452.6 Q442.4 264.8 442.4 254.6 V251 Q442 247 438 246.5 Z" fill="#1f2226"/>
<rect x="490.8" y="250.8" width="31.4" height="3" rx="1.5" fill="#46494e"/>
<circle cx="533.4" cy="252.2" r="3.2" fill="#3a3d42"/>
<circle cx="533.4" cy="252.2" r="1.4" fill="#2c2f34"/>
<!-- status -->
<text x="414.6" y="258.9" font-size="9" font-weight="bold" fill="#1a1a1a" letter-spacing="0.3">9:41</text>
<g fill="#111"><rect x="570.8" y="256.8" width="1.6" height="2.1" rx="0.3"/><rect x="573.2" y="255.6" width="1.6" height="3.3" rx="0.3"/><rect x="575.7" y="254.3" width="1.6" height="4.6" rx="0.3"/><rect x="578.2" y="253" width="1.6" height="5.9" rx="0.3"/></g>
<g fill="none" stroke="#111" stroke-width="1.3"><path d="M584.6 255.4 Q588.4 252 592.2 255.4"/><path d="M586.3 257.2 Q588.4 255.4 590.5 257.2" stroke-width="1.2"/></g><circle cx="588.4" cy="258.4" r="0.8" fill="#111"/>
<rect x="597" y="253.7" width="11.8" height="4.6" rx="1.1" fill="#111"/><rect x="609.4" y="255.2" width="1" height="1.8" rx="0.4" fill="#555"/>
<!-- image -->
<g clip-path="url(#imgclip)"><g transform="translate(476.3,369.5)">
<rect x="-1" y="-1" width="62" height="62" fill="#0b1715"/>
<g filter="url(#blur2)">
<rect x="-3" y="-3" width="30" height="9" fill="#8da39d"/>
<rect x="24" y="-3" width="16" height="7" fill="#3f5a54"/>
<rect x="47" y="-3" width="16" height="30" fill="#1f3d38"/>
<path d="M-3 27 L6 30 L9 40 L7 50 L-3 56 Z" fill="#d2dad7"/>
<path d="M-3 50 L10 49 L22 54 L25 63 L-3 63 Z" fill="#71827d"/>
<path d="M36 63 L45 53 L63 47 V63 Z" fill="#8c9b97"/>
</g>
<g filter="url(#blur1)">
<ellipse cx="31" cy="30" rx="23" ry="24.5" fill="#081210"/>
<ellipse cx="10" cy="17" rx="10" ry="10" fill="#0a1614"/>
<ellipse cx="22" cy="48" rx="13" ry="9" fill="#091311"/>
<path d="M2 60 L9 50 L11 52 L5 61 Z" fill="#0d1a18"/>
</g>
<g filter="url(#blur1)" fill="none" stroke="#1f5249" stroke-width="1.1">
<path d="M8 19 Q14 10 27 8"/><path d="M30 6 Q40 2 46 9"/>
<path d="M24 15 Q34 9 44 16 Q52 24 50 36 Q44 46 32 44"/>
<path d="M27 22 Q34 18 40 23 Q44 30 38 35 Q31 38 27 32"/>
<path d="M12 24 Q16 36 26 42"/><path d="M46 18 Q54 22 56 30"/>
</g>
<g fill="#9cc4ba" opacity="0.8"><circle cx="24" cy="16" r="0.55"/><circle cx="43" cy="8" r="0.7"/><circle cx="47" cy="19" r="0.7"/><circle cx="50" cy="24" r="0.5"/><circle cx="42" cy="38" r="0.5"/><circle cx="33" cy="41" r="0.6"/><circle cx="35" cy="14" r="0.45"/><circle cx="52" cy="33" r="0.5"/><circle cx="20" cy="27" r="0.45"/><circle cx="27" cy="33" r="0.45"/><circle cx="39" cy="5" r="0.5"/><circle cx="34" cy="51" r="0.5"/><circle cx="30" cy="25" r="0.4"/><circle cx="36" cy="29" r="0.4"/><circle cx="15" cy="12" r="0.5"/><circle cx="25" cy="43" r="0.5"/></g>
</g></g>
<!-- texts -->
<text x="506" y="451" font-size="7.4" fill="#333" text-anchor="middle">APP的slogan</text>
<text x="505.5" y="481" font-size="8" font-weight="bold" fill="#1a1a1a" text-anchor="middle" letter-spacing="2.55">188****8888</text>
<rect x="406" y="501.4" width="200" height="23.2" rx="3" fill="#ececec"/>
<text x="506" y="516.2" font-size="8.4" fill="#333" text-anchor="middle">手机号一键登陆</text>
<!-- login icons -->
<g fill="none" stroke="#f3f3f3" stroke-width="0.8"><circle cx="457" cy="642.7" r="14.4"/><circle cx="505" cy="642.7" r="14.4"/><circle cx="553.4" cy="642.7" r="14.4"/></g>
<rect x="453.2" y="637" width="7.8" height="11.6" rx="0.8" fill="none" stroke="#666" stroke-width="0.9"/><path d="M453.2 646.6 H461" stroke="#666" stroke-width="0.7"/>
<g transform="translate(499.4,636)" fill="#666"><path d="M6.2 3 C6.2 1.6 7.2 0.4 8.4 0.2 C8.5 1.6 7.4 2.9 6.2 3 Z"/><path d="M5.6 3.9 C4.9 3.9 4.1 3.3 3.1 3.3 C1.5 3.3 0.2 4.7 0.2 6.9 C0.2 9.4 1.9 12.6 3.5 12.6 C4.3 12.6 4.7 12.1 5.7 12.1 C6.7 12.1 7 12.6 7.9 12.6 C9.2 12.6 10.3 10.6 10.8 9.3 C9.6 8.8 8.9 7.8 8.9 6.6 C8.9 5.5 9.5 4.7 10.3 4.2 C9.7 3.5 8.8 3.3 8.1 3.3 C7 3.3 6.3 3.9 5.6 3.9 Z"/></g>
<g fill="#666"><ellipse cx="551.4" cy="641" rx="4.9" ry="4"/><path d="M548 644 L547.4 646.4 L550 645 Z"/><ellipse cx="556" cy="644.2" rx="4.2" ry="3.4" stroke="#fff" stroke-width="0.6"/><path d="M558 647 L559.4 648.6 L556.6 647.6 Z"/></g>
<g fill="#fff"><circle cx="549.8" cy="640" r="0.6"/><circle cx="553" cy="640" r="0.6"/><circle cx="554.6" cy="643.6" r="0.5"/><circle cx="557.4" cy="643.6" r="0.5"/></g>
<text x="506" y="680.6" font-size="7.27" fill="#333" text-anchor="middle">进入PMYX即简代表已同意《用户协议》及《隐私政策》</text>
<text x="505.8" y="688.6" font-size="7.2" fill="#333" text-anchor="middle">《中国移动认证服务条款》</text>
<rect x="466" y="723.6" width="80" height="3.2" rx="1.6" fill="#9a9a9a"/>
</svg>
<!-- selection -->
<div style="left:356px;top:210px;width:300px;height:562px;border:1px solid #1f86a4"></div>
<div class="hd" style="left:353px;top:207px"></div><div class="hd" style="left:503px;top:207px"></div><div class="hd" style="left:652px;top:207px"></div>
<div class="hd" style="left:353px;top:488px"></div><div class="hd" style="left:652px;top:488px"></div>
<div class="hd" style="left:353px;top:768px"></div><div class="hd" style="left:503px;top:768px"></div><div class="hd" style="left:652px;top:768px"></div>
<!--CANVAS-->
<div id="rightpanel" style="left:1010px;top:153px;width:274px;height:661px;background:#fff"></div>
<!-- tabs -->
<svg style="left:1026px;top:168px" width="12" height="12" viewBox="0 0 12 12"><circle cx="6" cy="6" r="5.2" fill="none" stroke="#2b5fc1" stroke-width="1.1"/><path d="M6 0.8 V11.2 M6 3.4 L9.6 2.6 M6 6 L11 5.4 M6 8.6 L10 8.6" stroke="#2b5fc1" stroke-width="1"/></svg>
<span class="t" style="left:1041.2px;top:168.5px;font-size:12px;color:#2b5fc1">样式</span>
<div style="left:1026px;top:188px;width:39px;height:3px;background:#2c63c8"></div>
<svg style="left:1128px;top:168px" width="9" height="13" viewBox="0 0 9 13"><path d="M3.4 0.7 H8 L5.6 5 H8 L1.6 12.2 L3.2 7 H0.8 Z" fill="none" stroke="#222" stroke-width="1.1" stroke-linejoin="round"/></svg>
<span class="t" style="left:1140px;top:168px;font-size:12px;color:#222">交互</span>
<svg style="left:1226px;top:169px" width="13" height="12" viewBox="0 0 13 12"><path d="M2 0.7 H10.6 Q12 0.7 12 2.1 V7.6 Q12 9 10.6 9 H8 L6.4 11 L4.8 9 H2 Q0.7 9 0.7 7.6 V2.1 Q0.7 0.7 2 0.7 Z" fill="none" stroke="#222" stroke-width="1.2" stroke-linejoin="round"/><path d="M3.4 3.6 H9.4 M3.4 6 H7.6" stroke="#222" stroke-width="1"/></svg>
<span class="t" style="left:1241.5px;top:168px;font-size:12px;color:#222">注释</span>
<div style="left:1010px;top:191px;width:274px;height:1px;background:#dcdcdc"></div>
<span class="t" style="left:1026px;top:205.5px;font-size:13.5px;color:#9a9a9a;letter-spacing:0.4px">(快照 名称)</span>
<svg style="left:1251.5px;top:205.5px" width="15" height="10" viewBox="0 0 15 10"><path d="M0.6 5 Q7.5 -3.4 14.4 5 Q7.5 13.4 0.6 5 Z" fill="none" stroke="#8a8a8a" stroke-width="1"/><circle cx="7.5" cy="5" r="2.2" fill="none" stroke="#8a8a8a" stroke-width="1"/></svg>
<div style="left:1010px;top:228px;width:274px;height:1px;background:#dcdcdc"></div>
<!-- align icons (disabled) -->
<svg style="left:1045px;top:244px" width="208" height="15" viewBox="0 0 208 15" fill="#dcdcdc">
<rect x="0" y="0" width="1.2" height="15"/><rect x="3" y="3" width="9" height="3"/><rect x="3" y="8.6" width="5.6" height="3"/>
<rect x="33.4" y="0" width="1.2" height="15"/><rect x="28.5" y="3" width="11" height="3"/><rect x="30.6" y="8.6" width="6.8" height="3"/>
<rect x="67.4" y="0" width="1.2" height="15"/><rect x="57" y="3" width="9" height="3"/><rect x="60.4" y="8.6" width="5.6" height="3"/>
<rect x="83.4" y="0" width="14" height="1.2"/><rect x="86.4" y="3" width="3" height="10"/><rect x="92" y="3" width="3" height="6"/>
<rect x="111.6" y="6.9" width="14" height="1.2"/><rect x="114.6" y="1.6" width="3" height="12"/><rect x="120.2" y="3.6" width="3" height="8"/>
<rect x="139.6" y="13.8" width="14" height="1.2"/><rect x="142.6" y="2" width="3" height="10"/><rect x="148.2" y="6" width="3" height="6"/>
<rect x="167.4" y="1" width="14" height="1.2"/><rect x="167.4" y="12.8" width="14" height="1.2"/><rect x="169.4" y="5.6" width="10" height="3.4"/>
<rect x="196.4" y="0" width="1.2" height="15"/><rect x="206.2" y="0" width="1.2" height="15"/><rect x="200.2" y="2.4" width="3.4" height="10"/>
</svg>
<!-- XY -->
<span class="t lb" style="left:1042px;top:282px">X</span>
<div class="inp" style="left:1050px;top:274px;width:48.5px;height:26px"></div>
<span class="t" style="left:1055.5px;top:281px;font-size:13px;color:#222">28</span>
<span class="t lb" style="left:1125px;top:282px">Y</span>
<div class="inp" style="left:1134px;top:274px;width:48.5px;height:26px"></div>
<span class="t" style="left:1139.5px;top:281px;font-size:13px;color:#222">16</span>
<svg style="left:1213.5px;top:281.5px" width="10" height="11" viewBox="0 0 10 11"><rect x="3.4" y="4.6" width="5.8" height="5.8" rx="1" fill="none" stroke="#cfcfcf" stroke-width="1"/><path d="M1 6.6 V4.2 Q1 2 3.2 2 H6.4 M4.8 0.4 L6.6 2 L4.8 3.6" fill="none" stroke="#cfcfcf" stroke-width="1"/></svg>
<div class="inp" style="left:1228px;top:274px;width:40px;height:26px"></div>
<span class="t" style="left:1233px;top:281px;font-size:13px;color:#dcdcdc">0°</span>
<span class="t lb" style="left:1040px;top:319px">W</span>
<div class="inp" style="left:1050px;top:311.5px;width:48.5px;height:25px"></div>
<span class="t" style="left:1055.5px;top:318px;font-size:13px;color:#222">300</span>
<svg style="left:1106.5px;top:317px" width="10" height="12" viewBox="0 0 10 12"><rect x="0" y="5.6" width="8" height="6" rx="0.8" fill="#8a8a8a"/><path d="M5.4 5.6 V3.2 A2 2 0 0 1 9.4 3.2 V4.2" fill="none" stroke="#8a8a8a" stroke-width="1.1"/></svg>
<span class="t lb" style="left:1125px;top:319px">H</span>
<div class="inp" style="left:1134px;top:311.5px;width:48.5px;height:25px"></div>
<span class="t" style="left:1139.5px;top:318px;font-size:13px;color:#222">562</span>
<svg style="left:1194.5px;top:320px" width="9" height="9" viewBox="0 0 9 9"><path d="M0.7 9 V5 Q0.7 0.7 5 0.7 H8.6" fill="none" stroke="#222" stroke-width="1.3"/></svg>
<div class="inp" style="left:1207.5px;top:311.5px;width:30px;height:25px"></div>
<span class="t" style="left:1213.5px;top:318px;font-size:13px;color:#222">30</span>
<svg style="left:1249px;top:314px" width="21" height="20" viewBox="0 0 21 20"><path d="M0.8 6.4 V2.4 Q0.8 0.8 2.4 0.8 H6.6 M13.8 0.8 H18 Q19.6 0.8 19.6 2.4 V6.4 M19.6 13 V17 Q19.6 18.6 18 18.6 H13.8 M6.6 18.6 H2.4 Q0.8 18.6 0.8 17 V13" fill="none" stroke="#2b5fc1" stroke-width="1.5"/></svg>
<div style="left:1010px;top:349px;width:274px;height:1px;background:#dcdcdc"></div>
<!-- snapshot section -->
<span class="t sh" style="left:1025px;top:359px">快照</span>
<svg style="left:1053.5px;top:363.5px" width="6" height="4" viewBox="0 0 6 4"><path d="M0 0 H6 L3 3.8 Z" fill="#8a8a8a"/></svg>
<span class="t" style="left:1038px;top:384px;font-size:11px;color:#222;letter-spacing:0.25px;text-decoration:underline;text-underline-offset:1.5px">快捷登陆页面</span>
<div style="left:1039px;top:408px;width:11px;height:11px;background:#2563d8;border-radius:2px"></div>
<svg style="left:1039px;top:408px" width="11" height="11" viewBox="0 0 11 11"><path d="M2.4 5.6 L4.6 7.8 L8.8 3.2" fill="none" stroke="#fff" stroke-width="1.4"/></svg>
<span class="t" style="left:1056px;top:408px;font-size:11px;color:#222;letter-spacing:0.25px">缩放到适合</span>
<span class="t" style="left:1038.5px;top:446px;font-size:10px;color:#e0e0e0">X</span>
<div class="inp" style="left:1047px;top:438.5px;width:29px;height:26px;background:#f5f5f5"></div>
<span class="t" style="left:1052.5px;top:445px;font-size:13px;color:#dedede">0</span>
<span class="t" style="left:1088px;top:446px;font-size:10px;color:#e0e0e0">Y</span>
<div class="inp" style="left:1096px;top:438.5px;width:29px;height:26px;background:#f5f5f5"></div>
<span class="t" style="left:1101.5px;top:445px;font-size:13px;color:#dedede">0</span>
<span class="t" style="left:1136px;top:446px;font-size:10px;color:#dcdcdc">倍率</span>
<div class="inp" style="left:1158px;top:438.5px;width:40px;height:26px;background:#f5f5f5"></div>
<span class="t" style="left:1164px;top:445px;font-size:13px;color:#dedede;letter-spacing:-0.6px">100%</span>
<span class="t" style="left:1038px;top:485px;font-size:10.5px;color:#222">边距</span>
<span class="t" style="left:1038px;top:518px;font-size:10.5px;color:#333">L:</span>
<div class="inp" style="left:1049.5px;top:510px;width:28.5px;height:25.5px;background:#f5f5f5"></div>
<span class="t" style="left:1054.5px;top:516.5px;font-size:13px;color:#222">20</span>
<span class="t" style="left:1099.5px;top:518px;font-size:10.5px;color:#333">R:</span>
<div class="inp" style="left:1112px;top:510px;width:28.5px;height:25.5px;background:#f5f5f5"></div>
<span class="t" style="left:1117px;top:516.5px;font-size:13px;color:#222">20</span>
<span class="t" style="left:1163.5px;top:518px;font-size:10.5px;color:#333">T:</span>
<div class="inp" style="left:1174px;top:510px;width:28.5px;height:25.5px;background:#f5f5f5"></div>
<span class="t" style="left:1179.5px;top:516.5px;font-size:13px;color:#222">20</span>
<span class="t" style="left:1225px;top:518px;font-size:10.5px;color:#333">B:</span>
<div class="inp" style="left:1236.5px;top:510px;width:29px;height:25.5px;background:#f5f5f5"></div>
<span class="t" style="left:1242.5px;top:516.5px;font-size:13px;color:#222">20</span>
<div style="left:1038px;top:566px;width:52px;height:20px;background:#f6f6f6;border:1px solid #cfcfcf;border-radius:3px"></div>
<span class="t" style="left:1044px;top:572px;font-size:10px;color:#222">设置动作</span>
<div style="left:1010px;top:611px;width:274px;height:1px;background:#dcdcdc"></div>
<span class="t sh" style="left:1025px;top:621.5px">元件样式</span>
<svg style="left:1076.5px;top:625.5px" width="6" height="4" viewBox="0 0 6 4"><path d="M0 0 H6 L3 3.8 Z" fill="#8a8a8a"/></svg>
<div class="inp" style="left:1038px;top:642px;width:163.5px;height:26px;background:#f3f3f3"></div>
<span class="t" style="left:1043px;top:649px;font-size:13px;color:#222;letter-spacing:0.1px">Snapshot*</span>
<svg style="left:1185.5px;top:652.5px" width="8" height="6" viewBox="0 0 8 6"><path d="M0.7 0.8 L4 4.2 L7.3 0.8" fill="none" stroke="#222" stroke-width="1.5"/></svg>
<svg style="left:1216px;top:646.5px" width="15" height="15" viewBox="0 0 15 15"><path d="M2.6 3.2 A6.4 6.4 0 1 1 2.6 11.8" fill="none" stroke="#222" stroke-width="1.3"/><path d="M0.4 7.5 H9.4 M6.4 4.2 L9.6 7.5 L6.4 10.8" fill="none" stroke="#222" stroke-width="1.3"/></svg>
<svg style="left:1247px;top:647px" width="17" height="17" viewBox="0 0 17 17"><rect x="0.7" y="0.7" width="15.2" height="15.2" rx="2.6" fill="none" stroke="#222" stroke-width="1.3"/><path d="M12 12 L7 7 M6.6 10.8 V6.6 H10.8" fill="none" stroke="#222" stroke-width="1.3"/></svg>
<div style="left:1010px;top:684px;width:274px;height:1px;background:#dcdcdc"></div>
<span class="t sh" style="left:1025px;top:695px">不透明度</span>
<svg style="left:1076.5px;top:698.5px" width="6" height="4" viewBox="0 0 6 4"><path d="M0 0 H6 L3 3.8 Z" fill="#8a8a8a"/></svg>
<div class="inp" style="left:1041px;top:715.5px;width:41.5px;height:25px;background:#f5f5f5"></div>
<span class="t" style="left:1044.5px;top:722px;font-size:13px;color:#222;letter-spacing:-0.8px">100%</span>
<div style="left:1091px;top:728px;width:169px;height:3px;background:#1a7ec8;border-radius:1.5px"></div>
<div style="left:1258px;top:724.5px;width:10px;height:10px;border-radius:50%;background:#fff;border:1.5px solid #777"></div>
<div style="left:1010px;top:755px;width:274px;height:1px;background:#dcdcdc"></div>
<span class="t sh" style="left:1025px;top:765px">排版</span>
<svg style="left:1053.5px;top:769px" width="6" height="4" viewBox="0 0 6 4"><path d="M0 0 H6 L3 3.8 Z" fill="#8a8a8a"/></svg>
<div class="inp" style="left:1038px;top:786px;width:230px;height:28px;background:#f3f3f3"></div>
<span class="t" style="left:1044px;top:794px;font-size:13px;color:#dedede">Arial</span>
<svg style="left:1252px;top:797px" width="8" height="6" viewBox="0 0 8 6"><path d="M0.7 0.8 L4 4.2 L7.3 0.8" fill="none" stroke="#8a8a8a" stroke-width="1.4"/></svg>
<!--RIGHT-->
<div id="frame2"></div><div id="frame"></div>
</body></html>
